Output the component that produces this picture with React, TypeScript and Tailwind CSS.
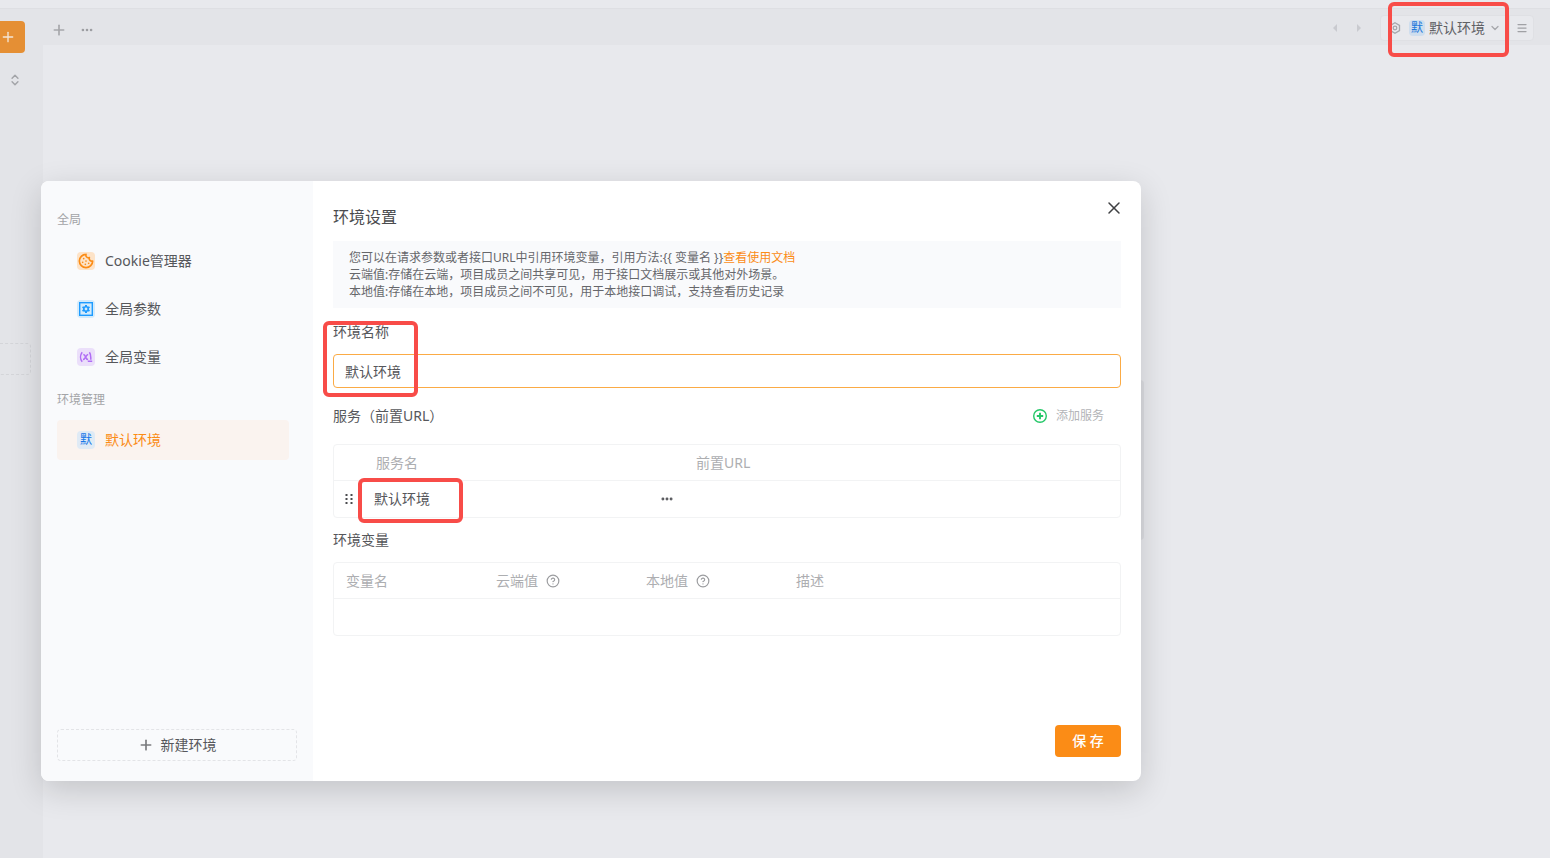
import { ChevronDown, ChevronsUpDown, CircleHelp, Cookie, Ellipsis, Menu, Plus, X } from "lucide-react";

const FONT = "font-['Noto_Sans','Noto_Sans_CJK_SC',sans-serif]";

function ParamsIcon() {
  return (
    <svg viewBox="0 0 18 18" className="size-[18px]" fill="none" stroke="#1e9bff">
      <rect x="2.7" y="2.7" width="12.6" height="12.6" strokeWidth="1.4" />
      <path d="M9 5v8M5.500 7l7 4M12.500 7l-7 4" strokeWidth="2" />
      <circle cx="9" cy="9" r="2.2" strokeWidth="1.6" fill="#d3ebfc" />
    </svg>
  );
}

function VariableIcon() {
  return (
    <svg viewBox="0 0 18 18" className="size-[18px]" fill="none" stroke="#b06df5" strokeWidth="1.5">
      <path d="M5.200 4.200C3 7 3 11 5.200 13.800" />
      <path d="M12.400 4.200c1 1.400 1.500 3.200 1.400 5.600v2M10.800 13.300h4.400" />
      <path d="M6.300 6.600c3 0 1.600 4.900 4.800 4.900M11.200 6.600c-2.400 0-2.800 4.900-5.200 4.900" />
    </svg>
  );
}

function HexIcon() {
  return (
    <svg viewBox="0 0 12 12" className="size-3" fill="none" stroke="currentColor" strokeWidth="1.3">
      <path d="M6 .8l4.5 2.600v5.200L6 11.200 1.500 8.600V3.400z" />
      <circle cx="6" cy="6" r="1.800" />
    </svg>
  );
}

function AddIcon() {
  return (
    <svg viewBox="0 0 14 14" className="size-[14px]" fill="none" stroke="#25c768">
      <circle cx="7" cy="7" r="6.300" strokeWidth="1.400" />
      <path d="M7 3.800v6.400M3.800 7h6.400" strokeWidth="1.900" />
    </svg>
  );
}

function DragIcon() {
  return (
    <svg viewBox="0 0 8 12" className="h-3 w-2" fill="#4a4b4e">
      {[2, 6, 10].map((y) => (
        <g key={y}>
          <rect x="0.5" y={y - 1} width="2" height="2" />
          <rect x="5.5" y={y - 1} width="2" height="2" />
        </g>
      ))}
    </svg>
  );
}

function Arrow({ flip = false }: { flip?: boolean }) {
  return (
    <svg viewBox="0 0 6 8" className="h-2 w-[6px]" fill="#c9cacf">
      <path d={flip ? "M1 0l4 4-4 4z" : "M5 0L1 4l4 4z"} />
    </svg>
  );
}

// red frame that calls out a control
function Callout({ className }: { className: string }) {
  return <span className={`pointer-events-none absolute z-10 rounded-md border-4 border-[#f84c48] ${className}`} />;
}

const GLOBALS = [
  { label: "Cookie管理器", tint: "bg-[#fde3c8]", icon: <Cookie className="size-4 text-[#fb8c16]" strokeWidth={2.5} /> },
  { label: "全局参数", tint: "bg-[#d3ebfc]", icon: <ParamsIcon /> },
  { label: "全局变量", tint: "bg-[#ebdffa]", icon: <VariableIcon /> },
];

const VARIABLE_COLUMNS = [
  { label: "变量名", help: false },
  { label: "云端值", help: true },
  { label: "本地值", help: true },
];

function Workspace() {
  return (
    <div className="flex min-h-screen flex-col bg-[#e8e9ed]">
      <div className="h-[9px] border-b border-[#dedfe3]" />
      <div className="flex flex-1">
        <aside className="flex w-[43px] shrink-0 flex-col items-start bg-[#e3e4e8] pt-3">
          <button aria-label="新建" className="flex h-8 w-[25px] items-center rounded-r-sm bg-[#e58f34] text-[#f3e6d8]">
            <Plus className="size-4" />
          </button>
          <button aria-label="展开" className="mt-5 ml-2 text-[#a3a4a8]">
            <ChevronsUpDown className="size-[14px]" strokeWidth={2.5} />
          </button>
          <div className="mt-64 h-8 w-[31px] rounded-r-sm border border-l-0 border-dashed border-[#d4d5d9]" />
        </aside>
        <main className="flex-1">
          <header className="flex h-9 items-center bg-[#e3e4e8] pt-[2px] pr-4 pl-2">
            <button aria-label="新标签" className="mt-1 text-[#a6a7ab]">
              <Plus className="size-4" strokeWidth={2.5} />
            </button>
            <button aria-label="更多" className="mt-1 ml-[13px] text-[#9c9da1]">
              <Ellipsis className="size-[14px]" strokeWidth={2.5} />
            </button>
            <div className="ml-auto flex items-center gap-[18px]">
              <Arrow />
              <Arrow flip />
            </div>
            <div className="ml-[18px] flex h-[26px] rounded-sm border border-[#dfe0e4] bg-[#e8e9ed]">
              <div className="relative flex items-center">
                <button className="flex items-center px-2 text-sm text-[#606165]">
                  <span className="text-[#a6a7ab]">
                    <HexIcon />
                  </span>
                  <span className="mr-1 ml-2 flex size-4 items-center justify-center rounded-sm bg-[#cfdeee] text-xs text-[#1c77db]">默</span>
                  默认环境
                  <ChevronDown className="ml-1 size-3 text-[#a6a7ab]" strokeWidth={2.5} />
                </button>
                <Callout className="-top-[14px] right-0 h-[55px] w-[121px]" />
              </div>
              <button aria-label="菜单" className="flex w-6 items-center justify-center border-l border-[#dfe0e4] text-[#a0a1a5]">
                <Menu className="size-3" strokeWidth={2.5} />
              </button>
            </div>
          </header>
        </main>
      </div>
      <div className="absolute top-[380px] left-[1132px] h-40 w-3 rounded-sm bg-[#dcdde1]" />
    </div>
  );
}

function Sidebar() {
  return (
    <nav className="flex w-[272px] shrink-0 flex-col bg-[#f9fafc] px-4 pt-7 pb-5 text-sm text-[#56575b]">
      <h3 className="text-xs leading-[22px] text-[#a3a4a7]">全局</h3>
      <ul className="my-[10px] mr-2 flex flex-col gap-2">
        {GLOBALS.map((item) => (
          <li key={item.label}>
            <button className="flex h-10 w-full items-center gap-[10px] pl-5">
              <span className={`flex size-[18px] items-center justify-center rounded-sm ${item.tint}`}>{item.icon}</span>
              {item.label}
            </button>
          </li>
        ))}
      </ul>
      <h3 className="mt-[2px] text-xs leading-[22px] text-[#a3a4a7]">环境管理</h3>
      <button className="mt-[9px] mr-2 flex h-10 items-center gap-[10px] rounded-sm bg-[#faf3ef] pl-5 text-[#fb8c16]">
        <span className="flex size-[18px] items-center justify-center rounded-sm bg-[#dfeaf5] text-xs text-[#1677e8]">默</span>
        默认环境
      </button>
      <button className="mt-auto flex h-8 items-center justify-center gap-[7px] rounded-sm border border-dashed border-[#e3e4e7]">
        <Plus className="size-4 text-[#7a7b7e]" strokeWidth={2.5} />
        新建环境
      </button>
    </nav>
  );
}

function ServiceTable() {
  return (
    <table className="mt-[18px] w-full table-fixed border-separate border-spacing-0 rounded-sm border border-[#f2f3f4] text-left">
      <colgroup>
        <col className="w-[30px]" />
        <col className="w-80" />
        <col />
      </colgroup>
      <thead className="text-[#adaeb1]">
        <tr className="h-9">
          <th className="border-b border-[#f2f3f4]" />
          <th className="border-b border-[#f2f3f4] px-3 font-normal">服务名</th>
          <th className="border-b border-[#f2f3f4] px-3 font-normal">前置URL</th>
        </tr>
      </thead>
      <tbody>
        <tr className="h-9">
          <td className="pl-[11px]">
            <DragIcon />
          </td>
          <td className="relative">
            <div className="flex items-center px-[10px]">
              <input aria-label="服务名" defaultValue="默认环境" className="min-w-0 flex-1 outline-none" />
              <button aria-label="更多操作">
                <Ellipsis className="size-[14px]" strokeWidth={3} />
              </button>
            </div>
            <Callout className="-top-[3px] -left-[6px] h-[45px] w-[105px]" />
          </td>
          <td />
        </tr>
      </tbody>
    </table>
  );
}

function VariableTable() {
  return (
    <table className="mt-3 w-full table-fixed border-separate border-spacing-0 rounded-sm border border-[#f2f3f4] text-left">
      <colgroup>
        <col className="w-[150px]" />
        <col className="w-[150px]" />
        <col className="w-[150px]" />
        <col />
      </colgroup>
      <thead className="text-[#adaeb1]">
        <tr className="h-9">
          {VARIABLE_COLUMNS.map((c) => (
            <th key={c.label} className="border-b border-[#f2f3f4] px-3 font-normal">
              <span className="flex items-center gap-2">
                {c.label}
                {c.help && <CircleHelp className="size-[14px] text-[#9b9c9f]" />}
              </span>
            </th>
          ))}
          <th className="border-b border-[#f2f3f4] px-3 font-normal">描述</th>
        </tr>
      </thead>
      <tbody>
        <tr className="h-9">
          <td colSpan={4} />
        </tr>
      </tbody>
    </table>
  );
}

function SettingsDialog() {
  return (
    <div
      role="dialog"
      aria-label="环境设置"
      className="absolute top-[181px] left-[41px] flex min-h-[600px] w-[1100px] overflow-hidden rounded-lg bg-white shadow-[0_9px_32px_rgba(0,0,0,0.16)]"
    >
      <Sidebar />
      <section className="flex min-w-0 flex-1 flex-col px-5 py-6 text-sm leading-5 text-[#56575b]">
        <div className="flex h-6 items-center justify-between">
          <h2 className="text-base leading-6 text-[#4a4b4e]">环境设置</h2>
          <button aria-label="关闭" className="-mr-[3px] mb-[18px] text-[#3f4043]">
            <X className="size-5" strokeWidth={1.8} />
          </button>
        </div>
        <div className="mt-3 bg-[#f9fafc] px-4 py-2 text-xs leading-[17px] text-[#66676b]">
          <p>
            您可以在请求参数或者接口URL中引用环境变量，引用方法:{"{{ 变量名 }}"}
            <a href="#" className="text-[#fb8c16]">查看使用文档</a>
          </p>
          <p>云端值:存储在云端，项目成员之间共享可见，用于接口文档展示或其他对外场景。</p>
          <p>本地值:存储在本地，项目成员之间不可见，用于本地接口调试，支持查看历史记录</p>
        </div>
        <div className="relative mt-[14px] flex flex-col gap-3">
          <label htmlFor="env-name">环境名称</label>
          <input id="env-name" defaultValue="默认环境" className="h-[34px] rounded-sm border border-[#fbab45] px-[11px] outline-none" />
          <Callout className="-top-px -left-[10px] h-[76px] w-[95px]" />
        </div>
        <div className="mt-[18px] flex items-center justify-between">
          <h3>服务（前置URL）</h3>
          <button className="mr-[17px] flex items-center gap-[9px] text-xs leading-5 text-[#b3b4b7]">
            <AddIcon />
            添加服务
          </button>
        </div>
        <ServiceTable />
        <h3 className="mt-3">环境变量</h3>
        <VariableTable />
        <button className="mt-auto h-8 w-[66px] self-end rounded-sm bg-[#fb8c16] font-medium text-white">保 存</button>
      </section>
    </div>
  );
}

export default function App() {
  return (
    <div className={`relative ${FONT}`}>
      <Workspace />
      <SettingsDialog />
    </div>
  );
}
